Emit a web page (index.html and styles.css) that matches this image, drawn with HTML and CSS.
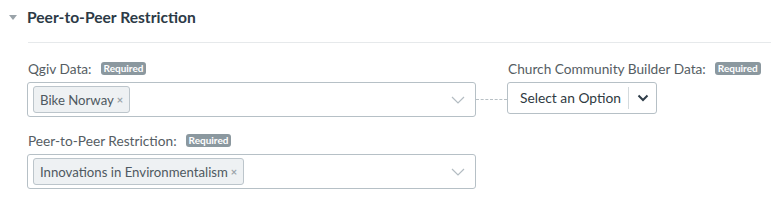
FILE: index.html
```html
<!DOCTYPE html>
<html>
<head>
<meta charset="utf-8">
<link rel="stylesheet" href="styles.css">
</head>
<body>
<section class="panel">
  <header class="panel-head">
    <span class="caret"></span>
    <h2 class="panel-title">Peer-to-Peer Restriction</h2>
  </header>
  <div class="panel-body">
    <div class="row">
      <div class="field field-wide">
        <div class="label">Qgiv Data: <span class="badge">Required</span></div>
        <div class="multi">
          <span class="tag">Bike Norway<span class="tag-x">×</span></span>
          <svg class="chev" width="14" height="8" viewBox="0 0 14 8"><path d="M1 1l6 6 6-6" fill="none" stroke="#b3bcc2" stroke-width="1.2"/></svg>
        </div>
      </div>
      <div class="connector"></div>
      <div class="field">
        <div class="label">Church Community Builder Data: <span class="badge">Required</span></div>
        <div class="dropdown">
          <span class="dd-text">Select an Option</span>
          <span class="dd-btn"><svg width="12" height="8" viewBox="0 0 12 8"><path d="M1.5 1.5l4.5 4.5 4.5-4.5" fill="none" stroke="#2f3d49" stroke-width="2"/></svg></span>
        </div>
      </div>
    </div>
    <div class="row">
      <div class="field field-wide">
        <div class="label">Peer-to-Peer Restriction: <span class="badge">Required</span></div>
        <div class="multi">
          <span class="tag">Innovations in Environmentalism<span class="tag-x">×</span></span>
          <svg class="chev" width="14" height="8" viewBox="0 0 14 8"><path d="M1 1l6 6 6-6" fill="none" stroke="#b3bcc2" stroke-width="1.2"/></svg>
        </div>
      </div>
    </div>
  </div>
</section>
</body>
</html>
```
FILE: styles.css
```css
* { box-sizing: border-box; }
html, body { margin: 0; padding: 0; background: #fff; }
body { font-family: Lato, "Open Sans", sans-serif; color: #555; }
.panel { padding: 0 0 0 9px; }
.panel-head {
  display: flex;
  align-items: center;
  height: 42px;
  padding-bottom: 8px;
}
.caret {
  width: 0; height: 0;
  border-left: 4.5px solid transparent;
  border-right: 4.5px solid transparent;
  border-top: 5px solid #9aa3a9;
  margin-right: 10px;
}
.panel-title {
  margin: 0;
  font-size: 15.6px;
  line-height: 18px;
  font-weight: 700;
  color: #2c3a46;
}
.panel-body {
  margin-left: 19px;
  border-top: 1px solid #e6e9eb;
  padding-top: 17px;
}
.row { display: flex; align-items: flex-start; margin-bottom: 15px; }
.field { display: flex; flex-direction: column; }
.field-wide { width: 449px; margin-left: -1px; }
.label {
  font-size: 13.7px;
  line-height: 17px;
  color: #555d63;
  height: 22px;
  display: flex;
  align-items: flex-start;
  padding-left: 1px;
  white-space: nowrap;
}
.badge {
  display: inline-block;
  background: #8b989f;
  color: #fff;
  font-size: 10px;
  font-weight: 700;
  line-height: 13px;
  height: 13px;
  padding: 0 3px;
  border-radius: 3px;
  margin-left: 9px;
  margin-top: 2px;
}
.multi {
  height: 35px;
  border: 1px solid #b6c0c6;
  border-radius: 3px;
  display: flex;
  align-items: center;
  padding: 0 10px 0 5px;
  justify-content: space-between;
}
.tag {
  display: inline-flex;
  align-items: center;
  height: 27px;
  padding: 0 6px 0 6px;
  border: 1px solid #bcc5cb;
  border-radius: 3px;
  background: #eef1f3;
  font-size: 13.2px;
  color: #4e5961;
  white-space: nowrap;
}
.tag-x { color: #9ba4aa; font-size: 11px; margin-left: 3px; font-weight: 700; }
.connector {
  width: 31px;
  margin-top: 39px;
  border-top: 1px dashed #b8c0c5;
}
.dropdown {
  width: 150px;
  height: 32px;
  border: 1px solid #b6c0c6;
  border-radius: 3px;
  display: flex;
  align-items: center;
}
.dd-text {
  flex: 1;
  font-size: 13.8px;
  color: #2f3a42;
  padding-left: 12px;
  border-right: 1px solid #d4dadd;
  height: 22px;
  line-height: 22px;
  white-space: nowrap;
}
.dd-btn { width: 27px; display: flex; justify-content: center; }
```
